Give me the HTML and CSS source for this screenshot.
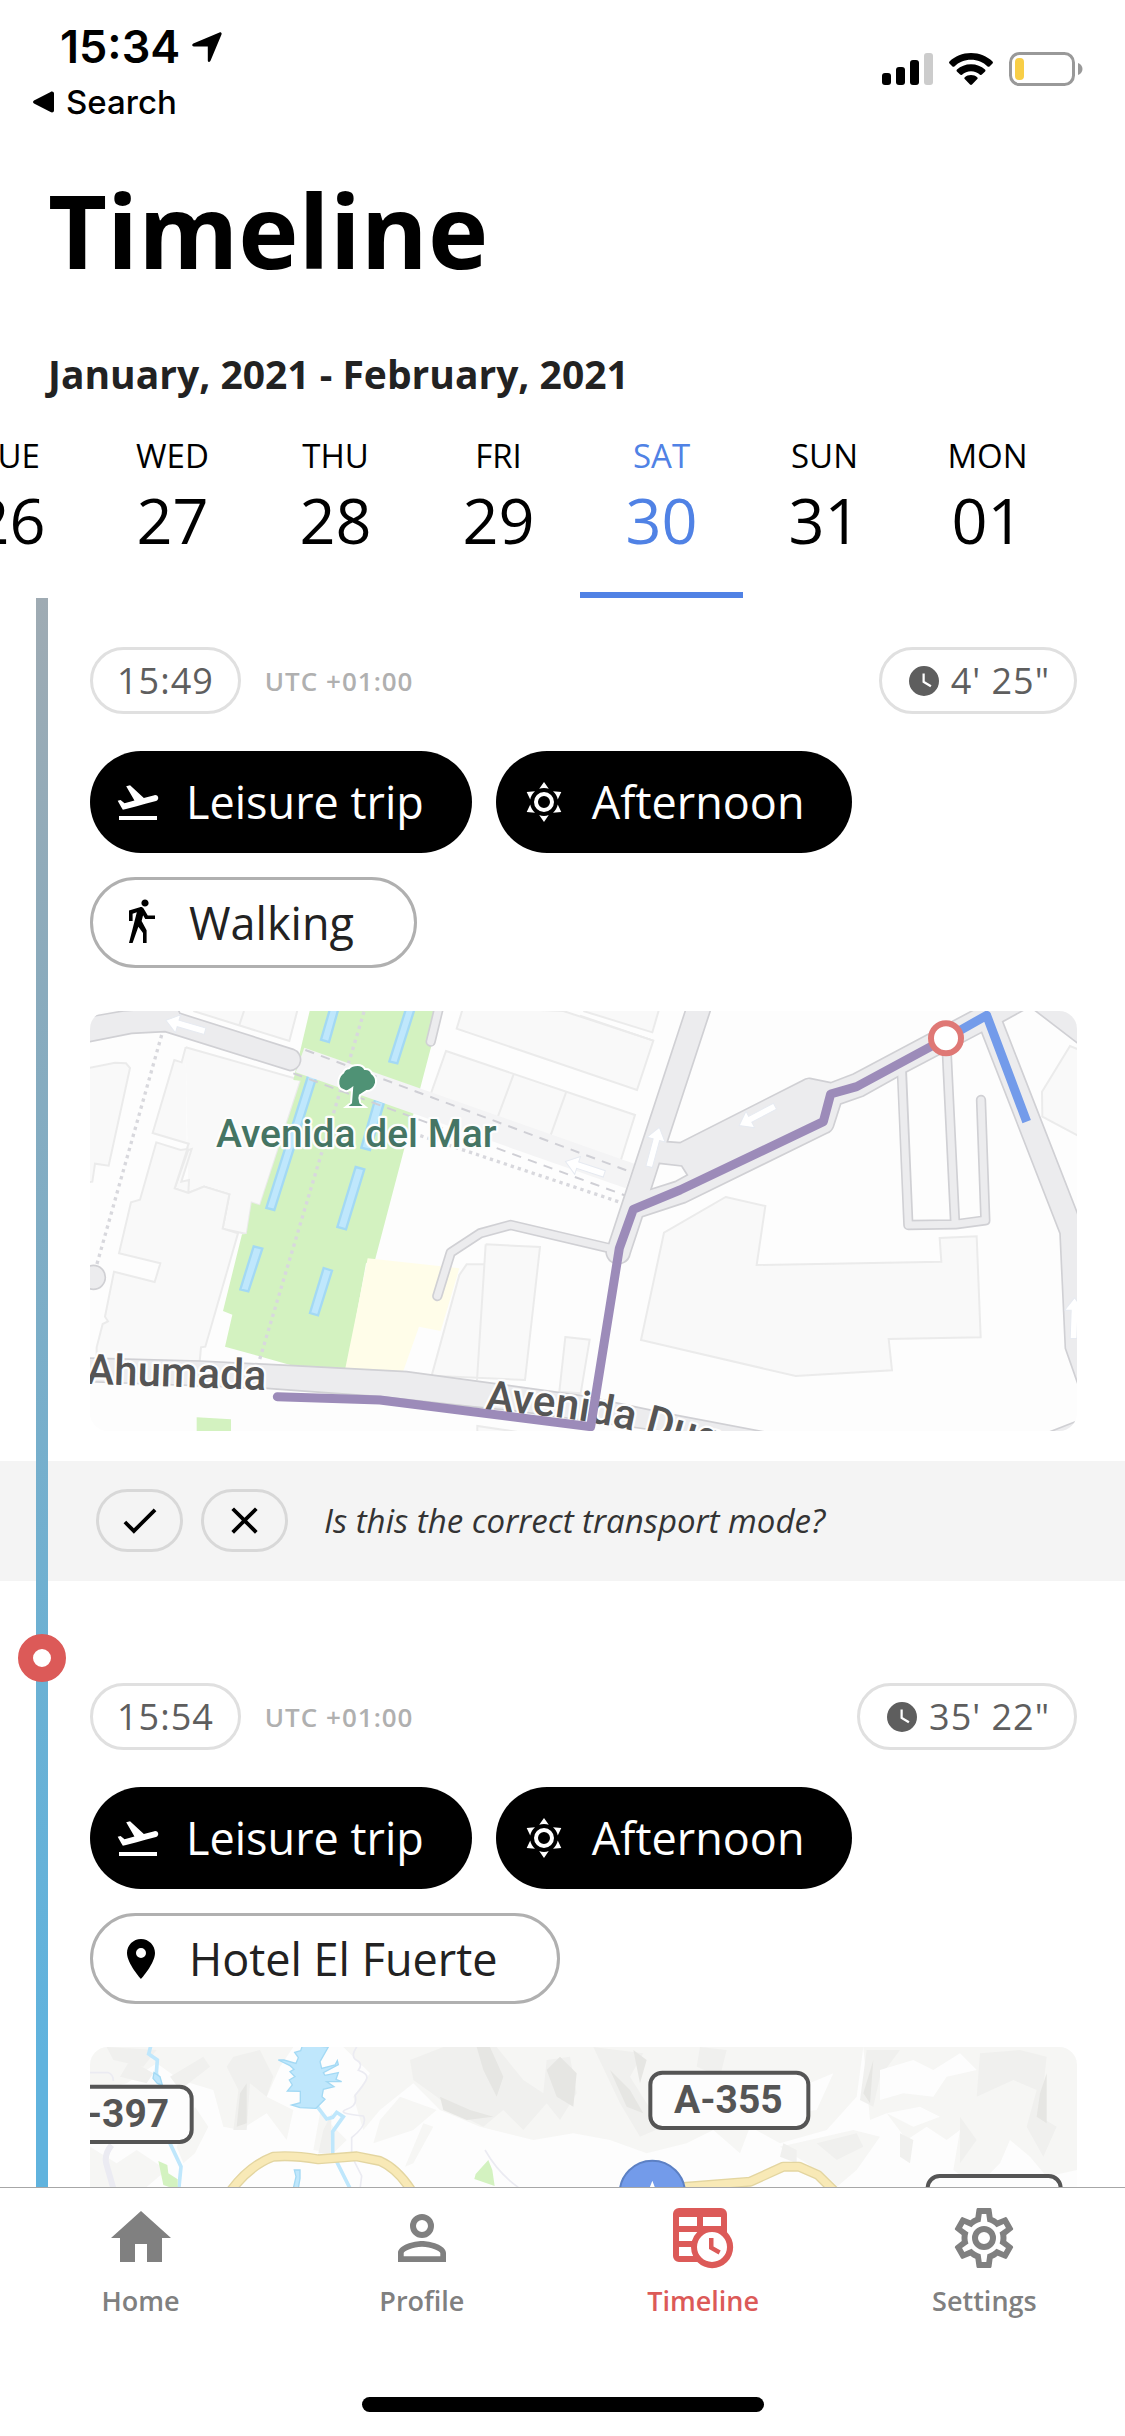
FILE: index.html
```html
<!DOCTYPE html>
<html lang="en">
<head>
<meta charset="utf-8">
<meta name="viewport" content="width=device-width, initial-scale=1">
<title>Timeline</title>
<link rel="stylesheet" href="styles.css">
</head>
<body>
<svg class="sprite" aria-hidden="true">
  <symbol id="i-takeoff" viewBox="0 0 24 24"><path d="M2.5 19h19v2h-19zm19.57-9.36c-.21-.8-1.04-1.28-1.84-1.06L14.92 10l-6.9-6.43-1.93.51 4.14 7.17-4.97 1.33-1.97-1.54-1.45.39 1.82 3.16.77 1.33 1.6-.43 5.31-1.42 4.35-1.16L21 11.49c.81-.23 1.28-1.05 1.07-1.85z"/></symbol>
  <symbol id="i-sun" viewBox="0 0 24 24"><path d="M12,7A5,5 0 0,1 17,12A5,5 0 0,1 12,17A5,5 0 0,1 7,12A5,5 0 0,1 12,7M12,9A3,3 0 0,0 9,12A3,3 0 0,0 12,15A3,3 0 0,0 15,12A3,3 0 0,0 12,9M12,2L14.39,5.42C13.65,5.15 12.84,5 12,5C11.16,5 10.35,5.15 9.61,5.42L12,2M3.34,7L7.5,6.65C6.9,7.16 6.36,7.78 5.94,8.5C5.5,9.24 5.25,10 5.11,10.79L3.34,7M3.36,17L5.12,13.23C5.26,14 5.53,14.78 5.95,15.5C6.37,16.24 6.91,16.86 7.5,17.37L3.36,17M20.65,7L18.88,10.79C18.74,10 18.47,9.23 18.05,8.5C17.63,7.78 17.1,7.15 16.5,6.64L20.65,7M20.64,17L16.5,17.36C17.09,16.85 17.62,16.22 18.04,15.5C18.46,14.77 18.73,14 18.87,13.21L20.64,17M12,22L9.59,18.56C10.33,18.83 11.14,19 12,19C12.82,19 13.63,18.83 14.37,18.56L12,22Z"/></symbol>
  <symbol id="i-walk" viewBox="0 0 24 24"><path d="M14.12,10H19V8.2H15.38L13.38,4.87C13.08,4.37 12.54,4.03 11.92,4.03C11.74,4.03 11.58,4.06 11.42,4.11L6,5.8V11H7.8V7.33L9.91,6.67L6,22H7.8L10.67,13.89L13,17V22H14.8V15.59L12.31,11.05L13.04,8.18M14,3.8C15,3.8 15.8,3 15.8,2C15.8,1 15,0.2 14,0.2C13,0.2 12.2,1 12.2,2C12.2,3 13,3.8 14,3.8Z"/></symbol>
  <symbol id="i-pin" viewBox="0 0 24 24"><path d="M12 2C8.13 2 5 5.13 5 9c0 5.25 7 13 7 13s7-7.75 7-13c0-3.87-3.13-7-7-7zm0 9.5a2.5 2.5 0 1 1 0-5 2.5 2.5 0 0 1 0 5z"/></symbol>
  <symbol id="i-clock" viewBox="0 0 24 24"><path d="M12 2a10 10 0 1 0 0 20 10 10 0 0 0 0-20zm4.2 14.2L11 13V7h1.5v5.2l4.5 2.7-.8 1.3z"/></symbol>
  <symbol id="i-check" viewBox="0 0 24 24"><path d="M21,7L9,19L3.5,13.5L4.91,12.09L9,16.17L19.59,5.59L21,7Z"/></symbol>
  <symbol id="i-close" viewBox="0 0 24 24"><path d="M19,6.41L17.59,5L12,10.59L6.41,5L5,6.41L10.59,12L5,17.59L6.41,19L12,13.41L17.59,19L19,17.59L13.41,12L19,6.41Z"/></symbol>
  <symbol id="i-home" viewBox="0 0 24 24"><path d="M10 20v-6h4v6h5v-8h3L12 3 2 12h3v8z"/></symbol>
  <symbol id="i-profile" viewBox="0 0 24 24"><path d="M12,4A4,4 0 0,1 16,8A4,4 0 0,1 12,12A4,4 0 0,1 8,8A4,4 0 0,1 12,4M12,6A2,2 0 0,0 10,8A2,2 0 0,0 12,10A2,2 0 0,0 14,8A2,2 0 0,0 12,6M12,13C14.67,13 20,14.33 20,17V20H4V17C4,14.33 9.33,13 12,13M12,14.9C9.03,14.9 5.9,16.36 5.9,17V18.1H18.1V17C18.1,16.36 14.97,14.9 12,14.9Z"/></symbol>
  <symbol id="i-table" viewBox="0 0 24 24"><path d="M4 2h14a2 2 0 0 1 2 2v6.1A7 7 0 1 1 10.1 20H4a2 2 0 0 1-2-2V4a2 2 0 0 1 2-2zm0 3v3h6V5zm8 0v3h6V5zm-8 5v3h4.3a7 7 0 0 1 1.8-3zm0 5v3h4.7a7 7 0 0 1-.7-3zm11-5a5 5 0 1 0 0 10 5 5 0 0 0 0-10zm-1 2h1.5v2.8l2.4 1.4-.7 1.3L14 15.7z"/></symbol>
  <symbol id="i-cog" viewBox="0 0 24 24"><path d="M12,8A4,4 0 0,1 16,12A4,4 0 0,1 12,16A4,4 0 0,1 8,12A4,4 0 0,1 12,8M12,10A2,2 0 0,0 10,12A2,2 0 0,0 12,14A2,2 0 0,0 14,12A2,2 0 0,0 12,10M10,22C9.75,22 9.54,21.82 9.5,21.58L9.13,18.93C8.5,18.68 7.96,18.34 7.44,17.94L4.95,18.95C4.73,19.03 4.46,18.95 4.34,18.73L2.34,15.27C2.21,15.05 2.27,14.78 2.46,14.63L4.57,12.97L4.5,12L4.57,11L2.46,9.37C2.27,9.22 2.21,8.95 2.34,8.73L4.34,5.27C4.46,5.05 4.73,4.96 4.95,5.05L7.44,6.05C7.96,5.66 8.5,5.32 9.13,5.07L9.5,2.42C9.54,2.18 9.75,2 10,2H14C14.25,2 14.46,2.18 14.5,2.42L14.87,5.07C15.5,5.32 16.04,5.66 16.56,6.05L19.05,5.05C19.27,4.96 19.54,5.05 19.66,5.27L21.66,8.73C21.79,8.95 21.73,9.22 21.54,9.37L19.43,11L19.5,12L19.43,13L21.54,14.63C21.73,14.78 21.79,15.05 21.66,15.27L19.66,18.73C19.54,18.95 19.27,19.04 19.05,18.95L16.56,17.95C16.04,18.34 15.5,18.68 14.87,18.93L14.5,21.58C14.46,21.82 14.25,22 14,22H10M11.25,4L10.88,6.61C9.68,6.86 8.62,7.5 7.85,8.39L5.44,7.35L4.69,8.65L6.8,10.2C6.4,11.37 6.4,12.64 6.8,13.8L4.68,15.36L5.43,16.66L7.86,15.62C8.63,16.5 9.68,17.14 10.87,17.38L11.24,20H12.76L13.13,17.39C14.32,17.14 15.37,16.5 16.14,15.62L18.57,16.66L19.32,15.36L17.2,13.81C17.6,12.64 17.6,11.37 17.2,10.2L19.31,8.65L18.56,7.35L16.15,8.39C15.38,7.5 14.32,6.86 13.12,6.62L12.75,4H11.25Z"/></symbol>
  <symbol id="i-arrow" viewBox="0 0 130 60"><path d="M4 30 42 2v17h84v20H42v19z"/></symbol>
</svg>

<div class="app">
  <div class="status">
    <div class="status-left">
      <div class="clock">
        <span>15:34</span>
        <svg class="locate" viewBox="0 0 30 30" aria-hidden="true"><path d="M27.500 0.400C29 0 30 1 29.500 2.500L18.500 28.800C18 30.400 15.800 30.200 15.800 28.400V14.600H1.800C0 14.600-.4 12.300 1.300 11.600z"/></svg>
      </div>
      <a class="back" href="#search">
        <svg class="back-icon" viewBox="0 0 21 22" aria-hidden="true"><path d="M19 .5c1 0 2 .8 2 2v17c0 1.200-1 2-2 2-.6 0-1-.2-1.400-.4L1 12.600c-1.300-.8-1.300-2.400 0-3.200L17.600.9C18 .7 18.400.5 19 .5z"/></svg>
        <span>Search</span>
      </a>
    </div>
    <div class="status-right">
      <svg class="signal" viewBox="0 0 51 32" aria-hidden="true"><rect y="20" width="9" height="12" rx="3"/><rect x="14" y="14" width="9" height="18" rx="3"/><rect x="28" y="7" width="9" height="25" rx="3"/><rect x="42" width="9" height="32" rx="3" fill="#ccc"/></svg>
      <svg class="wifi" viewBox="0 0 44 32" aria-hidden="true"><path d="M22 0C30.500 0 38 3.200 43.500 8.500c.6.600.6 1.300 0 1.900l-3 3c-.5.500-1.300.5-1.900 0C34.200 9.300 28.500 6.800 22 6.800S9.800 9.300 5.400 13.400c-.6.500-1.400.5-1.900 0l-3-3c-.6-.6-.6-1.300 0-1.900C6 3.200 13.500 0 22 0zM22 11.200c5.500 0 10.300 2 14 5.300.6.500.6 1.300.1 1.900l-3.200 3.200c-.5.500-1.300.5-1.900.1-2.500-2.200-5.500-3.400-9-3.400s-6.500 1.200-9 3.400c-.6.400-1.400.4-1.900-.1l-3.200-3.200c-.5-.6-.5-1.400.1-1.900 3.700-3.300 8.500-5.300 14-5.300zM22 22c2.500 0 4.600.8 6.200 2.200.6.500.6 1.300.1 1.900l-5.300 5.400c-.6.600-1.400.6-2 0l-5.300-5.400c-.5-.6-.5-1.400.1-1.900C17.400 22.800 19.500 22 22 22z"/></svg>
      <svg class="battery" viewBox="0 0 74 34" aria-hidden="true"><rect x="1.500" y="1.500" width="63" height="31" rx="9" fill="none" stroke="#999" stroke-width="3"/><path d="M69 11c3 1 4.500 3.500 4.500 6S72 22 69 23z" fill="#999"/><rect x="6" y="6" width="9" height="22" rx="4" fill="#f8ce46"/></svg>
    </div>
  </div>

  <header class="header">
    <h1>Timeline</h1>
    <h2>January, 2021 - February, 2021</h2>
  </header>

  <div class="days">
    <button class="day"><span class="day-name">TUE</span><span class="day-number">26</span></button>
    <button class="day"><span class="day-name">WED</span><span class="day-number">27</span></button>
    <button class="day"><span class="day-name">THU</span><span class="day-number">28</span></button>
    <button class="day"><span class="day-name">FRI</span><span class="day-number">29</span></button>
    <button class="day selected"><span class="day-name">SAT</span><span class="day-number">30</span></button>
    <button class="day"><span class="day-name">SUN</span><span class="day-number">31</span></button>
    <button class="day"><span class="day-name">MON</span><span class="day-number">01</span></button>
  </div>

  <main class="feed">
    <div class="timeline">
      <article class="entry">
        <div class="meta">
          <time class="pill">15:49</time>
          <span class="zone">UTC +01:00</span>
          <span class="pill duration"><svg class="clock-icon"><use href="#i-clock"/></svg>4' 25"</span>
        </div>
        <div class="chips">
          <button class="chip dark"><svg class="icon"><use href="#i-takeoff"/></svg>Leisure trip</button>
          <button class="chip dark"><svg class="icon"><use href="#i-sun"/></svg>Afternoon</button>
          <button class="chip"><svg class="icon"><use href="#i-walk"/></svg>Walking</button>
        </div>
        <svg class="map" viewBox="30 33 2961 1260" role="img" aria-label="Walking route map">
          <rect x="30" y="33" width="2961" height="1260" fill="#fdfdfd"/>
          <g class="building">
            <path d="M20 205 105 188 138 190 150 204 86 497 45 491 37 545 20 548z"/>
            <path d="M317 142 662 240 540 616 515 608 500 702 428 686 448 583 372 560 325 579 284 565 325 450 335 447 304 545 327 540 325 579M317 142 305 187 283 180 218 399 326 431 320 448"/>
            <path d="M229 427 302 450 322 447 284 565 325 579 372 560 448 583 428 686 474 700 376 1040 363 1042 359 1085 50 1080 50 1042 68 972 84 964 75 950 102 815 224 846 241 790 117 760 153 607 180 599z"/>
            <path d="M300 20 655 20 628 123 340 33M492 33 478 75"/>
            <path d="M1150 20 1130 86 1671 270 1720 122 1450 33z"/>
            <path d="M1098 153 1665 345 1618 495 1046 300zM1302 220 1248 365M1459 275 1405 425"/>
            <path d="M1500 47 1720 122M1510 33 1717 97 1738 25"/>
            <path d="M1217 733 1380 741 1335 1140 1055 1127 1138 825 1160 793 1213 793M1217 733 1191 1140"/>
            <path d="M1456 1011 1529 1019 1502 1180 1438 1175zM1192 1300V1278L1320 1297"/>
            <path d="M1937 591 2056 618 2030 795 2584 785 2579 714 2690 709 2702 1012 2426 1017 2436 1111 2147 1128 1683 1020 1752 698z"/>
            <path d="M3000 150 2970 138 2886 275 2887 350 3000 410z"/>
          </g>
          <path d="M692 20 640 240 662 242 540 616 515 608 500 702 486 703 429 933 457 944 435 1040 650 1100 800 1108 858 790 885 780 1085 20z" fill="#d3f2c0"/>
          <path d="M350 1252 453 1258V1300H350z" fill="#d3f2c0"/>
          <path d="M863 775 1138 805 1082 993 1017 980 968 1118 796 1105z" fill="#fffde9"/>
          <g fill="#bfe7fc" stroke="#a3d9f4" stroke-width="7">
            <path d="M752 20 777 20 747 126 723 119zM980 20 1006 20 952 190 928 184zM685 225 709 232 583 630 559 624zM885 300 912 308 870 450 844 443zM827 501 853 508 798 688 772 681zM521 739 547 746 505 874 481 868zM731 804 756 812 714 946 690 939z"/>
          </g>
          <g fill="none" stroke="#d8d8dd" stroke-width="10" stroke-dasharray="10 12">
            <path d="M245 105 50 795M852 35 537 1085M1000 400 1630 610"/>
          </g>
          <path d="M660 180 1650 528" fill="none" stroke="#f4f4f5" stroke-width="78"/>
          <path d="M676 150 1650 515M640 220 1640 588" fill="none" stroke="#cfcfd5" stroke-width="6" stroke-dasharray="28 22"/>
          <g class="casing"><path d="M1072 888 1112 758 1200 700 1292 675 1610 750M1080 10 1052 125M2465 200 2485 675 2627 673 2716 661 2703 300M2600 150 2625 665"/></g>
          <g class="road">
            <path d="M20 52 130 33 290 20 300 40 640 148A33 33 0 0 1 630 212L255 95 155 100 20 127z"/>
            <circle cx="40" cy="832" r="36"/>
            <path d="M20 1074 360 1083 640 1097 980 1115 1240 1150 1505 1187 1760 1240 2060 1297 2000 1330 1720 1290 1300 1232 1175 1220 900 1190 560 1165 20 1145z"/>
            <path d="M1820 20 1585 735A36 36 0 1 0 1650 762L1687 650 1815 608 2240 400Q2255 394 2260 380L2282 312 2350 288 2480 215 2705 97 2940 700 2956 1045 3000 1170V660L2768 65 2850 20H2700L2320 222 2252 248 2190 235Q2180 233 2165 243L1800 428 1762 425 1895 20z"/>
            <path d="M2850 20 3000 135V20z"/>
            <path d="M1738 490 1805 498 1822 525 1785 545 1713 568z" fill="#fdfdfd"/>
            <path d="M2905 1297 2995 1262V1300z"/>
          </g>
          <g class="lane"><path d="M1072 888 1112 758 1200 700 1292 675 1612 750M1080 10 1052 125M2465 215 2485 675 2627 673 2716 661 2703 300M2600 150 2625 665"/></g>
          <g fill="#fff" stroke="#e6eaf1" stroke-width="3">
            <use href="#i-arrow" width="130" height="60" transform="translate(262 31) rotate(16)"/>
            <use href="#i-arrow" width="130" height="60" transform="translate(1462 455) rotate(18)"/>
            <use href="#i-arrow" width="130" height="60" transform="translate(1960 352) rotate(-28)"/>
            <use href="#i-arrow" width="130" height="60" transform="translate(1768 386) rotate(105)"/>
            <use href="#i-arrow" width="130" height="60" transform="translate(3014 890) rotate(92)"/>
          </g>
          <path d="M833 198q14 0 20 12 16-2 20 12 14 10 12 26-6 22-26 22l-22 14-2 10 3 16 10 8h-42l10-8 4-52q-20 18-28 10-16-4-14-24 2-16 14-24 4-12 16-12 8-10 25-10z" fill="#4f9275" stroke="#fff" stroke-width="12" paint-order="stroke"/>
          <text class="place" x="408" y="440">Avenida del Mar</text>
          <text class="street" transform="translate(18 1151) rotate(2)">Ahumada</text>
          <path id="avenue" d="M1214 1229 1400 1248Q1590 1270 1760 1318L2300 1480" fill="none"/>
          <text class="street"><textPath href="#avenue">Avenida Duque</textPath></text>
          <g fill="none" stroke-width="27" stroke-linejoin="round">
            <path d="M2598 115 2720 46 2840 365" stroke="#739bea"/>
            <path d="M2598 115 2330 260 2252 282 2230 365 1800 570 1660 628 1618 745 1532 1280 900 1200 592 1190" stroke="#9c8bb9" stroke-linecap="round"/>
          </g>
          <circle cx="2598" cy="115" r="45" fill="#fff" stroke="#df7875" stroke-width="18"/>
        </svg>
        <div class="question">
          <button class="answer" aria-label="Yes"><svg class="answer-icon"><use href="#i-check"/></svg></button>
          <button class="answer" aria-label="No"><svg class="answer-icon"><use href="#i-close"/></svg></button>
          <p>Is this the correct transport mode?</p>
        </div>
      </article>

      <article class="entry">
        <span class="stop"></span>
        <div class="meta">
          <time class="pill">15:54</time>
          <span class="zone">UTC +01:00</span>
          <span class="pill duration"><svg class="clock-icon"><use href="#i-clock"/></svg>35' 22"</span>
        </div>
        <div class="chips">
          <button class="chip dark"><svg class="icon"><use href="#i-takeoff"/></svg>Leisure trip</button>
          <button class="chip dark"><svg class="icon"><use href="#i-sun"/></svg>Afternoon</button>
          <button class="chip"><svg class="icon"><use href="#i-pin"/></svg>Hotel El Fuerte</button>
        </div>
        <svg class="map" viewBox="30 51 2961 1260" role="img" aria-label="Map around Hotel El Fuerte">
          <rect x="30" y="51" width="2961" height="1260" fill="#fdfdfd"/>
          <g fill="#f6f6f4">
            <path d="M30 51H640L600 110 560 200 640 240 620 330 560 250 480 300 430 290 400 180 300 150 230 100 140 160 30 190zM30 350 110 400 170 360 260 420 200 471H30zM345 230 385 290 345 370 310 400 290 350zM720 250 800 330 760 370 700 360z"/>
            <path d="M790 51H1560 2350L2330 200 2240 300 2100 340 2010 290 1980 370 1900 300 1820 340 1700 370 1590 330 1480 310 1360 330 1200 290 1080 240 1000 160 900 240 850 300 820 200 870 130z"/>
            <path d="M960 200 1070 240 1000 300 880 340 900 270zM1030 280 1060 290 1000 400 975 410zM2100 350 2320 300 2400 320 2330 420 2270 471 2180 400z"/>
            <path d="M2350 51H2991V420L2900 440 2850 380 2790 330 2760 400 2690 471 2620 420 2640 300 2600 330 2540 290 2480 330 2420 250 2370 270z"/>
          </g>
          <g fill="#f0f0ee">
            <path d="M80 51 230 60 190 110 100 90zM150 90 220 130 200 160 120 140zM460 80 540 60 580 140 560 200 510 160 500 300 460 300 475 180 440 110zM270 140 370 80 390 110 300 180zM730 300 755 250 750 370 715 370z"/>
            <path d="M990 90 1090 51H1250L1330 150 1390 190 1400 90 1470 80 1490 190 1440 270 1400 220 1330 300 1270 240 1210 290 1130 250 1070 200 1000 150zM1540 51 1690 70 1650 140 1700 220 1750 290 1680 320 1620 220zM1860 51 1940 60 1920 140 1850 110zM2360 60 2460 60 2400 140 2380 230 2340 210z"/>
            <path d="M2700 70 2820 60 2900 80 2880 260 2930 290 2890 380 2840 290 2870 180 2800 150 2690 200zM2640 260 2690 330 2640 400zM2460 310 2500 330 2490 400 2460 380zM2210 340 2330 310 2350 350 2270 390zM2110 340 2150 360 2150 400 2100 380z"/>
          </g>
          <g fill="#e6e6e3">
            <path d="M1190 51 1230 51 1270 140 1250 200 1210 120zM1400 120 1440 80 1490 130 1480 230 1430 200zM1080 200 1170 240 1240 260 1160 270 1090 240zM1590 120 1650 180 1690 250 1640 230zM1660 60 1700 90 1680 160zM480 190 500 160 500 280 470 290zM2350 190 2380 90 2370 220zM2880 190 2900 130 2900 280 2870 260z"/>
          </g>
          <g fill="#fdfdfd"><path d="M2400 120 2500 90 2560 120 2640 70 2690 120 2600 140 2560 200 2470 190 2400 210zM2420 250 2520 230 2580 260 2500 290zM2140 180 2260 130 2210 240 2130 250z"/></g>
          <g fill="none" stroke="#ebebf2">
            <path d="M30 128h55q15 5 15 25M830 51q-20 30 0 40t5 30q30 10 25 25t-35 50q10 30-25 42t50 20q15 25-35 65v55l30 60-5 40M1215 360q40 70 100 112" stroke-width="5"/>
            <path d="M95 345q-25 30-15 60l20 70" stroke-width="18"/>
          </g>
          <g fill="none" stroke="#bfe7fc" stroke-width="11">
            <path d="M213 45 206 72 232 90 229 130 240 160 270 340 303 410 296 480M712 230 740 267 758 262 770 247 790 260 758 305V370L775 405 810 475"/>
          </g>
          <g fill="#bfe7fc" stroke="#a3d9f4" stroke-width="4">
            <path d="M668 45 662 62 644 67 655 83 648 100 612 90 595 90 630 107 642 118 630 125 645 140 628 150 637 165 622 183 661 184 661 218 635 225 660 233 708 235 735 208 726 200 730 178 762 170 740 155 785 155 768 148 775 128 735 136 730 128 775 104 772 92 765 105 725 115 720 95 745 51z"/>
            <path d="M222 128 240 140 247 165 232 160 219 145zM643 420h17v25l-5 30h-15l8-35z"/>
          </g>
          <path d="M235 393 262 405 265 430 293 448V480L250 465zM1225 390 1237 420 1244 468 1183 447 1187 432z" fill="#d3f2c0"/>
          <g fill="none" stroke-linejoin="round">
            <path d="M440 500Q500 410 580 380 640 375 715 388L830 379 900 393Q960 420 1005 500M1800 472 2011 455 2110 410H2157L2214 435 2270 490" stroke="#e3d5a0" stroke-width="30"/>
            <path d="M440 500Q500 410 580 380 640 375 715 388L830 379 900 393Q960 420 1005 500M1800 472 2011 455 2110 410H2157L2214 435 2270 490" stroke="#f8e9b6" stroke-width="22"/>
          </g>
          <g fill="#fdfdfd" stroke="#555" stroke-width="12">
            <rect x="-200" y="170" width="535" height="166" rx="36"/>
            <rect x="1711" y="128" width="474" height="166" rx="36"/>
            <rect x="2543" y="438" width="399" height="166" rx="36"/>
          </g>
          <text class="shield" x="20" y="292">-397</text>
          <text class="shield" x="1782" y="250">A-355</text>
          <circle cx="1717" cy="490" r="98" fill="#739bea" stroke="#5c80c4" stroke-width="6"/>
          <path d="M1717 452 1727 478 1755 480 1733 498 1741 525 1717 510 1693 525 1701 498 1679 480 1707 478z" fill="#fff"/>
        </svg>
      </article>
    </div>
  </main>

  <footer class="footer">
    <nav class="tabs">
      <a class="tab" href="#home"><svg><use href="#i-home"/></svg>Home</a>
      <a class="tab" href="#profile"><svg><use href="#i-profile"/></svg>Profile</a>
      <a class="tab active" href="#timeline" aria-current="page"><svg><use href="#i-table"/></svg>Timeline</a>
      <a class="tab" href="#settings"><svg><use href="#i-cog"/></svg>Settings</a>
    </nav>
    <div class="home-indicator"></div>
  </footer>
</div>
</body>
</html>
```
FILE: styles.css
```css
* {
  box-sizing: border-box;
}

body {
  margin: 0;
  background: #fff;
  color: #000;
  font-family: "Open Sans", "Noto Sans", sans-serif;
}

h1, h2, p {
  margin: 0;
}

button {
  margin: 0;
  padding: 0;
  border: 0;
  background: none;
  color: inherit;
  font: inherit;
  cursor: pointer;
}

a {
  color: inherit;
  text-decoration: none;
}

svg {
  display: block;
  flex: none;
  fill: currentColor;
}

.sprite {
  position: absolute;
  width: 0;
  height: 0;
}

.app {
  display: flex;
  flex-direction: column;
  height: 100vh;
}

/* Status bar */
.status {
  display: flex;
  justify-content: space-between;
  align-items: center;
  padding: 20px 42px 0 33px;
  font-family: Inter, "Liberation Sans", sans-serif;
}

.status-left {
  display: flex;
  flex-direction: column;
  gap: 8px;
}

.clock {
  display: flex;
  align-items: center;
  gap: 12px;
  padding-left: 27px;
  font-size: 45px;
  font-weight: 600;
  line-height: 54px;
}

.locate {
  width: 30px;
  height: 30px;
}

.back {
  display: flex;
  align-items: center;
  gap: 12px;
  font-size: 33px;
  font-weight: 500;
  line-height: 40px;
}

.back-icon {
  width: 21px;
  height: 22px;
}

.status-right {
  display: flex;
  align-items: center;
  gap: 16px;
  padding-bottom: 4px;
}

.signal {
  width: 51px;
  height: 32px;
}

.wifi {
  width: 44px;
  height: 32px;
}

.battery {
  width: 74px;
  height: 34px;
}

/* Heading */
.header {
  padding: 39px 48px 0;
}

h1 {
  font-size: 102px;
  font-weight: 700;
  line-height: 138px;
}

h2 {
  margin-top: 48px;
  color: #222;
  font-size: 39px;
  font-weight: 700;
  line-height: 54px;
}

/* Day strip */
.days {
  display: flex;
  flex: none;
  margin-top: 32px;
  margin-left: -72px;
  overflow: hidden;
}

.day {
  display: flex;
  flex: none;
  flex-direction: column;
  align-items: center;
  width: 163px;
  padding-bottom: 30px;
  border-bottom: 6px solid transparent;
}

.day.selected {
  border-color: #5082e5;
  color: #5082e5;
}

.day-name {
  font-size: 33px;
  line-height: 45px;
}

.day-number {
  font-size: 63px;
  line-height: 84px;
}

/* Feed */
.feed {
  flex: 1;
  min-height: 0;
  overflow: hidden auto;
  scrollbar-width: none;
}

.timeline {
  position: relative;
  display: flex;
  flex-direction: column;
  gap: 53px;
}

.timeline::before {
  content: "";
  position: absolute;
  z-index: 1;
  top: 0;
  bottom: 0;
  left: 36px;
  width: 12px;
  background: linear-gradient(#9fabb3, #8aabbd 21%, #77afcc 45%, #6bb1d4 58%, #60b3de 78%);
}

.entry {
  position: relative;
  padding: 49px 48px 0 90px;
}

.stop {
  position: absolute;
  z-index: 2;
  top: 0;
  left: 18px;
  width: 48px;
  height: 48px;
  border: 15px solid #dc5a58;
  border-radius: 50%;
  background: #fff;
}

.meta {
  display: flex;
  align-items: center;
}

.pill {
  display: flex;
  align-items: center;
  gap: 9px;
  padding: 6px 24px;
  border: 3px solid #e0e0e0;
  border-radius: 34px;
  color: #5e5e5e;
  font-size: 36px;
  line-height: 49px;
  letter-spacing: 1px;
}

.duration {
  margin-left: auto;
}

.clock-icon {
  width: 36px;
  height: 36px;
}

.zone {
  margin-left: 24px;
  color: #b0b0b0;
  font-size: 26px;
  font-weight: 600;
  letter-spacing: 1px;
}

.chips {
  display: flex;
  flex-wrap: wrap;
  gap: 24px;
  margin-top: 37px;
}

.chip {
  display: flex;
  align-items: center;
  gap: 24px;
  padding: 12px 60px 12px 24px;
  border: 3px solid #b0b0b0;
  border-radius: 51px;
  color: #222;
  font-size: 45px;
  line-height: 61px;
}

.chip.dark {
  padding: 20px 48px 21px 24px;
  border: 0;
  background: #000;
  color: #fff;
}

.icon {
  width: 48px;
  height: 48px;
}

.chip:not(.dark) .icon {
  color: #000;
}

.map {
  width: 100%;
  height: auto;
  margin-top: 43px;
  border-radius: 18px;
}

.building {
  fill: #f9f9f9;
  stroke: #ebebeb;
  stroke-width: 6px;
}

.road {
  fill: #ececee;
  stroke: #d0d0d4;
  stroke-width: 5px;
}

.casing {
  fill: none;
  stroke: #d0d0d4;
  stroke-width: 31px;
  stroke-linecap: round;
  stroke-linejoin: round;
}

.lane {
  fill: none;
  stroke: #ececee;
  stroke-width: 21px;
  stroke-linecap: round;
  stroke-linejoin: round;
}

.place,
.street,
.shield {
  font-family: Roboto, "Liberation Sans", sans-serif;
  font-weight: 500;
  paint-order: stroke;
  stroke: #fdfdfd;
  stroke-width: 14px;
  stroke-linejoin: round;
}

.place {
  fill: #457564;
  font-size: 117px;
}

.street {
  fill: #555;
  font-size: 126px;
}

.shield {
  fill: #555;
  font-size: 117px;
  font-weight: 700;
}

.question {
  display: flex;
  align-items: center;
  gap: 18px;
  margin: 30px -48px 0 -90px;
  padding: 28px 48px 29px 96px;
  background: #f4f4f4;
}

.answer {
  padding: 6px 18px;
  border: 3px solid #d8d8d8;
  border-radius: 32px;
  color: #000;
}

.answer-icon {
  width: 45px;
  height: 45px;
}

.question p {
  padding-left: 18px;
  color: #333;
  font-size: 33px;
  font-style: italic;
  line-height: 45px;
}

/* Tab bar */
.footer {
  display: flex;
  flex-direction: column;
  flex: none;
  align-items: center;
  gap: 78px;
  padding: 14px 0 24px;
  border-top: 1px solid #a7a7a7;
  background: #fff;
}

.tabs {
  display: flex;
  width: 100%;
}

.tab {
  display: flex;
  flex: 1;
  flex-direction: column;
  align-items: center;
  gap: 8px;
  color: #808080;
  font-size: 27px;
  font-weight: 600;
  line-height: 37px;
}

.tab svg {
  width: 72px;
  height: 72px;
}

.tab.active {
  color: #dc5a58;
}

.home-indicator {
  width: 402px;
  height: 15px;
  border-radius: 8px;
  background: #000;
}
```
